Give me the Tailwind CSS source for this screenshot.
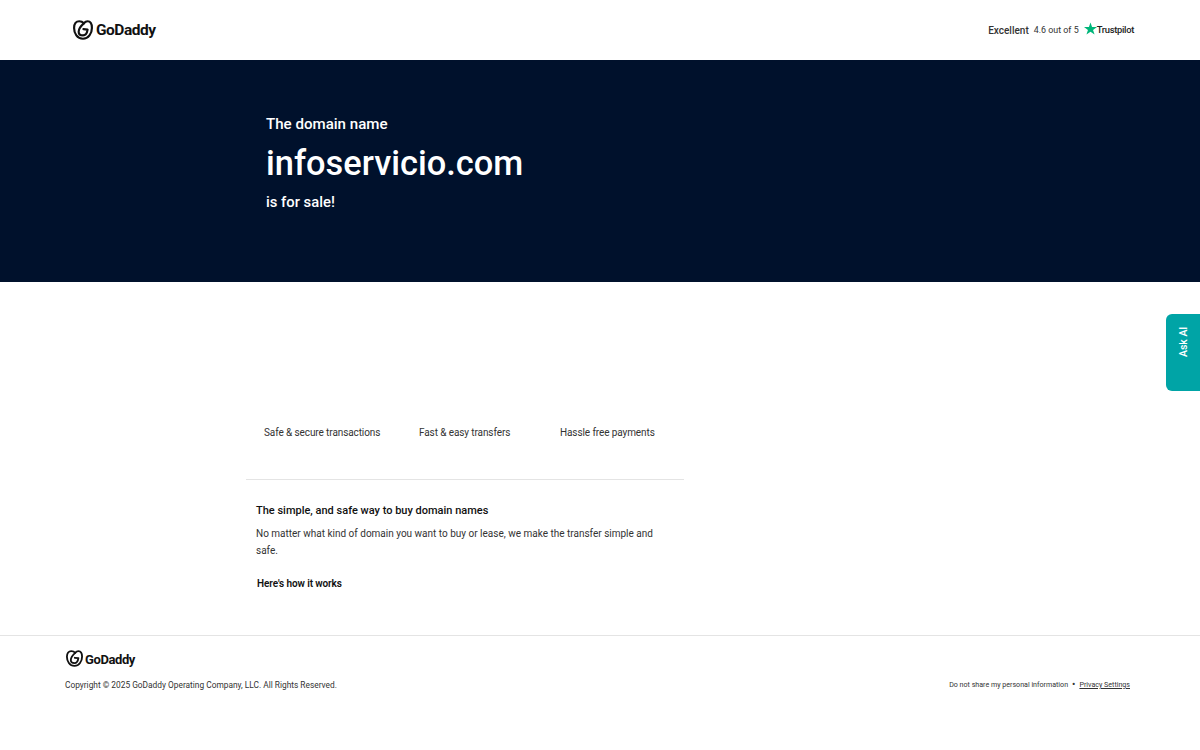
<!DOCTYPE html>
<html lang="en">
<head>
<meta charset="utf-8">
<title>infoservicio.com</title>
<script src="https://cdn.jsdelivr.net/npm/@tailwindcss/browser@4"></script>
</head>
<body class="bg-white font-['Roboto',sans-serif] text-[#111]">
<div class="relative h-[750px] w-[1200px] overflow-hidden">
  <header class="flex h-[60px] items-center justify-between pl-[73px] pr-[66px]">
    <div class="flex items-center gap-[3px]">
      <svg width="20" height="20" viewBox="0 0 24 24" fill="none" stroke="#111" stroke-width="2.600" stroke-linecap="round" stroke-linejoin="round"><path d="M12 22.500C5 22.500 1.300 16 1.300 9.500C1.300 4.500 3.800 1.500 7.500 1.500C9.500 1.500 11.500 2.300 13 4C14.500 2.300 15.500 1.500 17.500 1.500C20.700 1.500 22.700 4.500 22.700 9.500C22.700 16 18.500 22.500 12 22.500Z"/><path d="M13 4C9 7.500 6.800 11 6.800 14C6.800 17 9.200 18.500 12 18.500C14.800 18.500 16.800 16 17.500 11.500L12.500 11"/></svg>
      <span class="mt-[1px] text-[15.500px] font-bold leading-none tracking-[-0.5px] text-[#111]">GoDaddy</span>
    </div>
    <div class="flex items-center text-[#333]">
      <span class="mt-[1px] text-[10px] font-medium">Excellent</span>
      <span class="ml-[5px] mt-[1px] text-[8.900px]">4.6 out of 5</span>
      <svg class="mb-[4px] ml-[5px]" width="13" height="13" viewBox="0 0 24 24"><path fill="#00b67a" d="M12 1l2.900 8.300H24l-7.300 5.300 2.800 8.400L12 17.800 4.500 23l2.800-8.400L0 9.300h9.100z"/></svg>
      <span class="text-[9.400px] font-medium tracking-[-0.3px] text-[#222]">Trustpilot</span>
    </div>
  </header>

  <section class="h-[222px] bg-[#00112c] pl-[266px] pt-[54px] text-white">
    <p class="text-[15.100px] font-medium leading-[20px]">The domain name</p>
    <h1 class="mt-[8px] text-[34.400px] font-medium leading-[42px]">infoservicio.com</h1>
    <p class="mt-[8px] text-[14.800px] font-medium leading-[20px]">is for sale!</p>
  </section>

  <main class="w-[684px] pl-[246px] pt-[143px]">
    <div class="flex h-[54px] text-[10px] tracking-[-0.1px] text-[#333]">
      <span class="ml-[18px] w-[137px] whitespace-nowrap leading-[16px]">Safe &amp; secure transactions</span>
      <span class="ml-[18px] w-[141px] whitespace-nowrap leading-[16px]">Fast &amp; easy transfers</span>
      <span class="whitespace-nowrap leading-[16px]">Hassle free payments</span>
    </div>
    <div class="border-t border-[#e4e4e4] pl-[10px] pr-[24px] pt-[22px]">
      <h2 class="text-[11px] font-medium leading-[18px] text-[#111]">The simple, and safe way to buy domain names</h2>
      <p class="mt-[5px] text-[10px] leading-[17px] text-[#333]">No matter what kind of domain you want to buy or lease, we make the transfer simple and safe.</p>
      <p class="mt-[17px] pl-[1px] text-[10px] font-semibold leading-[16px] tracking-[-0.1px] text-[#111]">Here's how it works</p>
    </div>
  </main>

  <footer class="absolute inset-x-0 top-[635px] border-t border-[#e4e4e4] pl-[66px] pr-[70px] pt-[14px]">
    <div class="flex items-center gap-[2px]">
      <svg width="17" height="17" viewBox="0 0 24 24" fill="none" stroke="#111" stroke-width="2.600" stroke-linecap="round" stroke-linejoin="round"><path d="M12 22.500C5 22.500 1.300 16 1.300 9.500C1.300 4.500 3.800 1.500 7.500 1.500C9.500 1.500 11.500 2.300 13 4C14.500 2.300 15.500 1.500 17.500 1.500C20.700 1.500 22.700 4.500 22.700 9.500C22.700 16 18.500 22.500 12 22.500Z"/><path d="M13 4C9 7.500 6.800 11 6.800 14C6.800 17 9.200 18.500 12 18.500C14.800 18.500 16.800 16 17.500 11.500L12.500 11"/></svg>
      <span class="mt-[1px] text-[13px] font-bold leading-none tracking-[-0.4px] text-[#111]">GoDaddy</span>
    </div>
    <div class="-ml-[1px] mt-[12px] flex items-center justify-between">
      <span class="text-[8.350px] leading-[12px] text-[#333]">Copyright © 2025 GoDaddy Operating Company, LLC. All Rights Reserved.</span>
      <div class="flex items-center text-[7.100px] text-[#333]">
        <span>Do not share my personal information</span>
        <span class="mx-[4px] text-[10px] leading-none">•</span>
        <a class="underline" href="#">Privacy Settings</a>
      </div>
    </div>
  </footer>

  <button class="absolute right-0 top-[314px] flex h-[77px] w-[34px] items-center justify-center rounded-l-[6px] bg-[#00a4a6] text-white">
    <span class="mb-[22px] ml-[2px] -rotate-90 whitespace-nowrap text-[10.500px] font-medium">Ask AI</span>
  </button>
</div>
</body>
</html>
